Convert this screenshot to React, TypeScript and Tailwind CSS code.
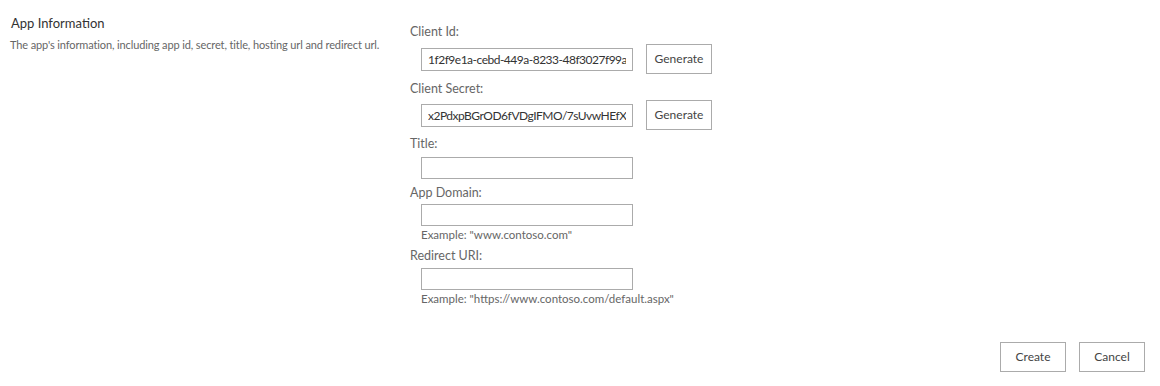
const font = { fontFamily: 'Lato, "Noto Sans", sans-serif' };

function Field({ label, top }: { label: string; top: string }) {
  return <div className={`h-[18px] text-[12.5px] leading-[18px] text-[#666] ${top}`}>{label}</div>;
}

function TextBox({ value, className = '' }: { value?: string; className?: string }) {
  return (
    <input
      readOnly
      defaultValue={value}
      className={`ml-[11px] h-[22px] w-[212px] border border-[#ababab] bg-white px-[6px] text-[12px] tracking-[-0.5px] text-[#333] outline-none ${className}`}
    />
  );
}

function Btn({ children }: { children: string }) {
  return (
    <button className="h-[30px] w-[66px] border border-[#ababab] bg-white text-[12px] text-[#444]">
      {children}
    </button>
  );
}

export default function App() {
  return (
    <div className="h-[386px] w-[1160px] bg-white" style={font}>
      <div className="flex">
        {/* Section description */}
        <div className="w-[410px] pl-[11px] pt-[14px]">
          <div className="h-[18px] text-[13px] leading-[18px] text-[#333]">App Information</div>
          <div className="-ml-[1px] mt-[5px] text-[11px] leading-[16px] tracking-[-0.12px] text-[#666]">
            The app's information, including app id, secret, title, hosting url and redirect url.
          </div>
        </div>

        {/* Form fields */}
        <div className="flex flex-col pt-[23px]">
          <Field label="Client Id:" top="" />
          <div className="mt-[3px] flex items-center gap-[13px]">
            <TextBox value="1f2f9e1a-cebd-449a-8233-48f3027f99ac" className="h-[23px]" />
            <Btn>Generate</Btn>
          </div>

          <Field label="Client Secret:" top="mt-[6px]" />
          <div className="mt-[2px] flex items-center gap-[13px]">
            <TextBox value="x2PdxpBGrOD6fVDgIFMO/7sUvwHEfXl.Rk3uA=" className="h-[23px]" />
            <Btn>Generate</Btn>
          </div>

          <Field label="Title:" top="mt-[5px]" />
          <TextBox className="mt-[4px]" />

          <Field label="App Domain:" top="mt-[5px]" />
          <TextBox className="mt-[2px]" />
          <div className="ml-[11px] text-[11.5px] leading-[18px] text-[#666]">Example: "www.contoso.com"</div>

          <Field label="Redirect URI:" top="mt-[3px]" />
          <TextBox className="mt-[3px]" />
          <div className="ml-[11px] text-[11.5px] leading-[18px] text-[#666]">
            Example: "https://www.contoso.com/default.aspx"
          </div>
        </div>
      </div>

      {/* Actions */}
      <div className="mt-[34px] flex justify-end gap-[13px] pr-[15px]">
        <Btn>Create</Btn>
        <Btn>Cancel</Btn>
      </div>
    </div>
  );
}
